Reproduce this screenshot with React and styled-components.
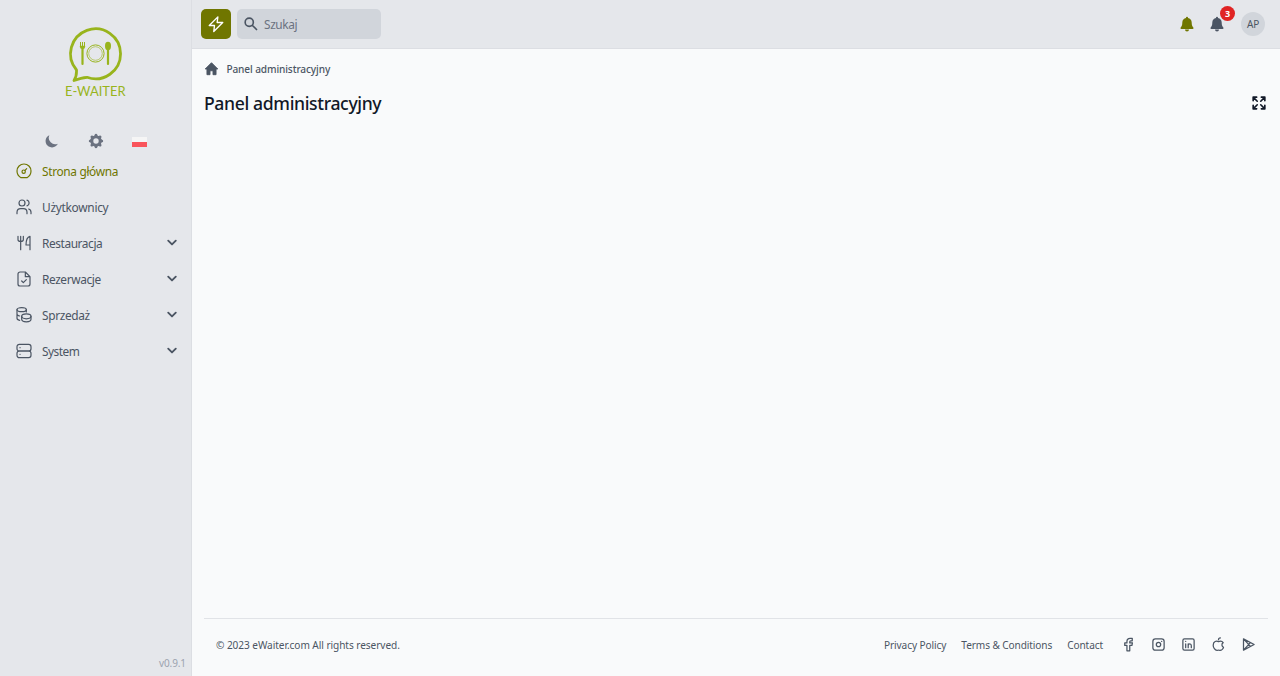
import React from 'react';
import styled, { createGlobalStyle } from 'styled-components';

const Global = createGlobalStyle`
  * { box-sizing: border-box; }
  body { margin: 0; background: #f9fafb; font-family: "Noto Sans", "Open Sans", sans-serif; color: #4b5563; }
  button { border: 0; padding: 0; background: none; font: inherit; color: inherit; display: block; }
  a { color: inherit; text-decoration: none; }
  svg { display: block; }
`;
const Shell = styled.div`display: grid; grid-template-columns: 192px 1fr; height: 676px; overflow: hidden;`;
const Sidebar = styled.aside`background: #e5e7eb; border-right: 1px solid #dcdee3; display: flex; flex-direction: column; padding-top: 20px;`;
const Logo = styled.a`height: 84px; display: flex; padding-left: 65px;`;
const Tools = styled.div`display: flex; justify-content: space-between; padding: 0 44px 0 44px; margin-top: 29px; height: 16px; align-items: center; color: #6b7280;`;
const Flag = styled.span`width: 15px; height: 10px; margin-top: 1px; background: linear-gradient(#f5f5f5 50%, #f9545b 50%);`;
const Menu = styled.nav`display: flex; flex-direction: column; gap: 4px; margin-top: 6px;`;
const MenuItem = styled.a`height: 32px; display: flex; align-items: center; padding: 0 12px 0 16px; color: ${p => p.$active ? '#6f7600' : '#4b5563'};`;
const Label = styled.span`font-size: 11.9px; margin-left: 10px; flex: 1; line-height: 16px; white-space: nowrap; letter-spacing: ${p => p.$ls || 0}px;`;
const Version = styled.div`margin-top: auto; align-self: flex-end; padding-right: 5px; font-size: 10px; line-height: 14px; margin-bottom: 6px; letter-spacing: -.1px; color: #9ca3af;`;
const Page = styled.div`display: flex; flex-direction: column; min-width: 0;`;
const Topbar = styled.header`height: 49px; background: #e5e7eb; border-bottom: 1px solid #dcdee3; display: flex; align-items: center; padding: 0 15px 1px 9px;`;
const Bolt = styled.button`width: 30px; height: 30px; border-radius: 5px; background: #707600; color: #fff; display: grid; place-items: center;`;
const Search = styled.div`width: 144px; height: 30px; border-radius: 5px; background: #d1d5db; margin-left: 6px; padding-left: 7px; display: flex; align-items: center; gap: 6px; font-size: 11.9px; line-height: 16px; letter-spacing: -.4px; color: #6b7280;
  svg { color: #4b5563; }`;
const Actions = styled.div`margin-left: auto; display: flex; align-items: center;`;
const BellButton = styled.button`position: relative; margin-right: ${p => p.$gap}px; color: ${p => p.$c};`;
const Badge = styled.span`position: absolute; top: -10px; left: 11px; width: 15px; height: 15px; border-radius: 50%; background: #e02424; color: #fff; font-size: 9px; font-weight: 700; line-height: 15px; text-align: center;`;
const Avatar = styled.span`width: 24px; height: 24px; border-radius: 50%; background: #d1d5db; font-size: 10px; line-height: 25px; letter-spacing: -.1px; text-align: center;`;
const Main = styled.main`flex: 1; padding: 0 12px; display: flex; flex-direction: column;`;
const Crumb = styled.div`height: 39px; display: flex; align-items: center; gap: 7.400px; font-size: 10.1px; font-weight: 500; letter-spacing: -.11px;`;
const TitleRow = styled.div`height: 30px; display: flex; align-items: center; justify-content: space-between; color: #111827; padding-right: 2px;
  svg { margin-top: -1px; }`;
const Title = styled.h1`font-size: 17.6px; font-weight: 500; margin: 0; line-height: 28px; letter-spacing: -.36px;`;
const Footer = styled.footer`margin-top: auto; border-top: 1px solid #e1e3e7; height: 58px; padding: 0 12px 6px; display: flex; justify-content: space-between; align-items: center; font-size: 10.1px;`;
const Copyright = styled.span`letter-spacing: -.06px;`;
const Links = styled.div`display: flex; align-items: center; gap: 15px;`;
const FootLink = styled.a`letter-spacing: -.1px;`;
const Socials = styled.div`display: flex; gap: 15px; margin-left: 3px;`;

const Icon = ({ size = 16, w = 1.8, children, box = 24 }) => (
  <svg width={size} height={size} viewBox={`0 0 ${box} ${box}`} fill="none" stroke="currentColor" strokeWidth={w} strokeLinecap="round" strokeLinejoin="round">{children}</svg>
);
const Chevron = () => <Icon size={14} w={3.2}><path d="M5.500 8l6.500 6.500L18.500 8" /></Icon>;
const Bell = () => <svg width="16" height="16" viewBox="0 0 16 16" fill="currentColor"><path d="M8 .7a1 1 0 0 0-1 1v.4C4.900 2.500 3.300 4.300 3.300 6.500c0 2.600-.5 3.900-1.600 5-.5.5-.2 1.400.6 1.400h11.400c.8 0 1.100-.9.6-1.400-1.100-1.100-1.600-2.400-1.600-5 0-2.200-1.600-4-3.700-4.400v-.4a1 1 0 0 0-1-1zM6 13.600a2 2 0 0 0 4 0z" /></svg>;

const Brand = () => (
  <svg width="66" height="84" viewBox="0 0 66 84" fill="none" stroke="#98b41c">
    <path d="M9 60.500C12 56 11.500 53 11.500 50A25 25 0 1 1 22 57.300C17 57.500 14 58.500 9 60.500Z" strokeWidth="2.800" strokeLinejoin="round" />
    <circle cx="30.500" cy="33.500" r="8.600" strokeWidth="1" /><circle cx="30.500" cy="33.500" r="6.800" strokeWidth=".6" />
    <path d="M15.500 22v5M17.500 22v5M19.500 22v5" strokeWidth="1" /><path d="M15 26h5q0 3-2.500 3T15 26Z" fill="#98b41c" strokeWidth=".5" />
    <path d="M17.500 29v15M43 29v15" strokeWidth="2.200" strokeLinecap="round" /><ellipse cx="43" cy="26" rx="3" ry="4.200" fill="#98b41c" stroke="none" />
    <text x="0" y="76" textLength="60.500" lengthAdjust="spacingAndGlyphs" fontFamily="Lato, sans-serif" fontSize="12.500" fill="#98b41c" stroke="none">E-WAITER</text>
  </svg>
);
const menu = [
  ['Strona główna', -.34, 0, <><path d="M7.500 22h9c3.500-2 6-6 6-10A10.500 10.500 0 1 0 1.500 12c0 4 2.500 8 6 10z" /><circle cx="11.500" cy="13" r="2.500" /><path d="M13.500 11l2.500-2.500" /></>],
  ['Użytkownicy', -.28, 0, <><circle cx="9" cy="6" r="4.500" /><path d="M1.500 22v-2c0-3.500 2.500-5.500 5.500-5.500h4c3 0 5.500 2 5.500 5.500v2M16.500 1.700a4.500 4.500 0 0 1 0 8.600M19 15c2.500.7 3.500 2.500 3.500 5v2" /></>],
  ['Restauracja', -.42, 1, <><path d="M3 2v5c0 3.500 8 3.500 8 0V2M7 2v20M21 22V2c-4 1-6 7-6 13h6" /></>],
  ['Rezerwacje', -.4, 1, <><path d="M14 1.500H6a3 3 0 0 0-3 3v15a3 3 0 0 0 3 3h12a3 3 0 0 0 3-3v-11zM14 1.500v7h7M8.500 15l2.500 2.500 4.500-4.500" /></>],
  ['Sprzedaż', -.35, 1, <><ellipse cx="8.500" cy="4" rx="7" ry="3" /><path d="M1.500 4v13c0 1.500 1.500 2.500 4 3M15.500 4v3.500M1.500 10.500c0 1.500 1.500 2.500 4 3" /><ellipse cx="15.500" cy="14" rx="7" ry="3.700" /><path d="M8.500 14v4.500c0 5 14 5 14 0V14" /></>],
  ['System', -.5, 1, <><rect x="1.500" y="2" width="21" height="10" rx="3.500" /><rect x="1.500" y="12" width="21" height="10" rx="3.500" /><path d="M6 7h.1M6 17h.1" /></>],
];
const socials = [
  <path d="M18 2h-3.500C11.500 2 9.500 4 9.500 7v2.500H6v4h3.500V22h4.500v-8.500h3.500l.8-4H14V7.500c0-1 .5-1.500 1.500-1.500H18z" />,
  <><rect x="3" y="3" width="18" height="18" rx="4" /><circle cx="12" cy="12" r="3.500" /><path d="M17 7h.1" /></>,
  <><rect x="3" y="3" width="18" height="18" rx="2.500" /><path d="M7.500 11v6M7.500 7v.1M11.500 17v-6M11.500 14c0-4 5-4 5 0v3" /></>,
  <><path d="M19.500 9C17 5.500 14 6.500 12 7.500 9 5.500 3.500 7 3.500 13c0 4 3 8.500 6 8.500 1 0 1.500-.7 2.500-.7s1.500.7 2.500.7c2.500 0 5-3 5.500-5-3-1.500-3.500-5.500-.5-7.500zM12 4.500c0-2 1-3 3-3" /></>,
  <><path d="M4 3v18l17-9zM4 3l11 12M4 21L15 9" /></>,
];

export default function App() {
  return <><Global /><Shell>
    <Sidebar>
      <Logo><Brand /></Logo>
      <Tools>
        <svg width="16" height="16" viewBox="0 0 20 20" fill="currentColor"><path d="M17.293 13.293A8 8 0 0 1 6.707 2.707a8.001 8.001 0 1 0 10.586 10.586z" /></svg>
        <svg width="18" height="18" viewBox="0 0 20 20" fill="currentColor"><path fillRule="evenodd" d="M11.490 3.170c-.38-1.560-2.600-1.560-2.980 0a1.532 1.532 0 0 1-2.286.948c-1.372-.836-2.942.734-2.106 2.106.54.886.061 2.042-.947 2.287-1.561.379-1.561 2.600 0 2.978a1.532 1.532 0 0 1 .947 2.287c-.836 1.372.734 2.942 2.106 2.106a1.532 1.532 0 0 1 2.287.947c.379 1.561 2.600 1.561 2.978 0a1.533 1.533 0 0 1 2.287-.947c1.372.836 2.942-.734 2.106-2.106a1.533 1.533 0 0 1 .947-2.287c1.561-.379 1.561-2.600 0-2.978a1.532 1.532 0 0 1-.947-2.287c.836-1.372-.734-2.942-2.106-2.106a1.532 1.532 0 0 1-2.287-.947zM10 13a3 3 0 1 0 0-6 3 3 0 0 0 0 6z" /></svg>
        <Flag />
      </Tools>
      <Menu>{menu.map(([name, ls, sub, art], i) => <MenuItem key={name} $active={i === 0}><Icon>{art}</Icon><Label $ls={ls}>{name}</Label>{sub ? <Chevron /> : null}</MenuItem>)}</Menu>
      <Version>v0.9.1</Version>
    </Sidebar>
    <Page>
      <Topbar>
        <Bolt><Icon size={18}><path d="M14.500 2.500L3 14h7l-1 8L21 10h-7.500z" /></Icon></Bolt>
        <Search><Icon size={14} w={2.800} ><circle cx="9" cy="9" r="7" /><path d="M14.500 14.500L21.500 21.500" /></Icon><span>Szukaj</span></Search>
        <Actions>
          <BellButton $gap={14} $c="#707600"><Bell /></BellButton>
          <BellButton $gap={16} $c="#4b5563"><Bell /><Badge>3</Badge></BellButton>
          <Avatar>AP</Avatar>
        </Actions>
      </Topbar>
      <Main>
        <Crumb><svg width="15" height="14" viewBox="0 0 16 16" fill="currentColor"><path d="M8 .8L.8 8h2v6.500h3.500V10h3.400v4.500h3.500V8h2z" stroke="currentColor" strokeLinejoin="round" /></svg><span>Panel administracyjny</span></Crumb>
        <TitleRow><Title>Panel administracyjny</Title><Icon size={14} w={2.800}><path d="M2 8V2h6M2 2l7 7M16 2h6v6M22 2l-7 7M2 16v6h6M2 22l7-7M22 16v6h-6M22 22l-7-7" /></Icon></TitleRow>
        <Footer>
          <Copyright>© 2023 eWaiter.com All rights reserved.</Copyright>
          <Links><FootLink>Privacy Policy</FootLink><FootLink>Terms &amp; Conditions</FootLink><FootLink>Contact</FootLink>
            <Socials>{socials.map((s, i) => <Icon key={i} size={15} w={2}>{s}</Icon>)}</Socials></Links>
        </Footer>
      </Main>
    </Page>
  </Shell></>;
}
